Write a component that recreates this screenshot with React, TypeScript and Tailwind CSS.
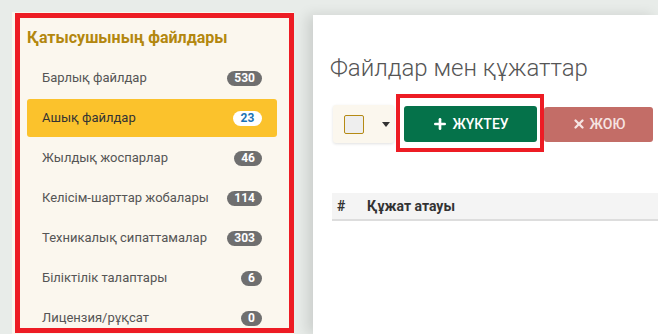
import { Plus, X } from "lucide-react";

type FileCategory = {
  label: string;
  count: number;
  active?: boolean;
};

const categories: FileCategory[] = [
  { label: "Барлық файлдар", count: 530 },
  { label: "Ашық файлдар", count: 23, active: true },
  { label: "Жылдық жоспарлар", count: 46 },
  { label: "Келісім-шарттар жобалары", count: 114 },
  { label: "Техникалық сипаттамалар", count: 303 },
  { label: "Біліктілік талаптары", count: 6 },
  { label: "Лицензия/рұқсат", count: 0 },
];

function Sidebar() {
  return (
    <aside className="relative w-[282px] shrink-0 mt-[12px] bg-[#fbf7ee] pl-[15px] pr-[17px] pt-[15px]">
      <h2 className="text-[16px] font-bold text-[#b3870f] leading-[22px] mb-[9px]">
        Қатысушының файлдары
      </h2>
      <ul>
        {categories.map((item) => (
          <li
            key={item.label}
            className={
              item.active
                ? "flex items-center justify-between h-[38px] my-[1px] px-[15px] rounded-[3px] bg-[#fbc22c] text-[#333]"
                : "flex items-center justify-between h-[40px] px-[15px] text-[#555]"
            }
          >
            <span className="text-[13px]">{item.label}</span>
            <span
              className={
                item.active
                  ? "h-[15px] min-w-[29px] px-[7px] rounded-full bg-white text-[#1b72b5] text-[12px] font-bold leading-[15px] text-center"
                  : "h-[15px] min-w-[20px] px-[7px] rounded-full bg-[#6f6f6f] text-white text-[12px] font-bold leading-[15px] text-center"
              }
            >
              {item.count}
            </span>
          </li>
        ))}
      </ul>
      {/* highlight frame */}
      <div className="absolute left-[3px] top-[1px] w-[279px] h-[320px] border-[5px] border-[#ed1c24] pointer-events-none" />
    </aside>
  );
}

function Toolbar() {
  return (
    <div className="flex items-center mt-[22px] ml-[3px]">
      <div className="flex items-center h-[38px] w-[61px] rounded-[3px] bg-[#fbf7ee] shadow-[0_1px_3px_rgba(0,0,0,0.12)] pl-[11px]">
        <span className="block w-[20px] h-[19px] border-[1.5px] border-[#b58a14] bg-[#eeeeee] rounded-[2px]" />
        <span className="ml-[18px] w-0 h-0 border-l-[4px] border-r-[4px] border-t-[5px] border-l-transparent border-r-transparent border-t-[#333]" />
      </div>
      <div className="relative ml-[10px]">
        <button className="flex items-center justify-center gap-[4px] w-[133px] h-[36px] rounded-[3px] bg-[#05724a] text-white text-[14px] font-medium">
          <Plus size={16} strokeWidth={4} />
          <span>ЖҮКТЕУ</span>
        </button>
        <div className="absolute left-[-8px] top-[-12px] w-[148px] h-[58px] border-[4px] border-[#ed1c24] pointer-events-none" />
      </div>
      <button className="flex items-center justify-center gap-[4px] ml-[7px] w-[109px] h-[35px] rounded-[3px] bg-[#c36d67] text-[#f6e4e2] text-[14px] font-medium">
        <X size={14} strokeWidth={4} />
        <span>ЖОЮ</span>
      </button>
    </div>
  );
}

function MainPanel() {
  return (
    <main className="flex-1 mt-[15px] ml-[19px] bg-white shadow-[-6px_0_12px_rgba(0,0,0,0.12)] pl-[17px] pt-[38px]">
      <h1 className="text-[24px] font-light text-[#555] leading-[30px]">
        Файлдар мен құжаттар
      </h1>
      <Toolbar />
      <div className="mt-[50px] ml-[2px] h-[28px] flex items-center bg-[#f4f4f4] border-b-[2px] border-[#dddddd] text-[14px] font-bold text-[#333]">
        <span className="pl-[5px] w-[35px]">#</span>
        <span>Құжат атауы</span>
      </div>
    </main>
  );
}

export default function App() {
  return (
    <div className="w-[658px] h-[334px] overflow-hidden flex pl-[12px] bg-[#e8ece9] font-['Roboto','Liberation_Sans',sans-serif]">
      <Sidebar />
      <MainPanel />
    </div>
  );
}
